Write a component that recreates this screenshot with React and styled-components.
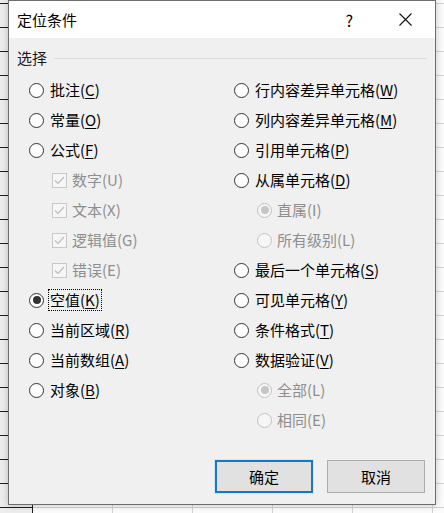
import React from 'react';
import styled, { createGlobalStyle } from 'styled-components';

const GlobalStyle = createGlobalStyle`
  body {
    margin: 0;
    font-family: "Noto Sans CJK SC", "Noto Sans", sans-serif;
  }
`;

// spreadsheet behind the dialog
const Sheet = styled.div`
  width: 444px;
  height: 513px;
  overflow: hidden;
  padding-left: 8px;
  box-sizing: border-box;
  background-color: #fbfbfb;
  background-image:
    linear-gradient(#1e1e1e 1px, transparent 1px),
    linear-gradient(90deg, transparent 32px, #1e1e1e 32px, #1e1e1e 33px, transparent 33px),
    linear-gradient(#d2d2d2 1px, transparent 1px),
    linear-gradient(90deg, #d2d2d2 1px, transparent 1px),
    linear-gradient(90deg, #ededed 32px, transparent 32px);
  background-size: 32px 24px, 100% 100%, 100% 24px, 80px 100%, 100% 100%;
  background-position: 0 3px, 0 0, 0 3px, 32px 0, 0 0;
  background-repeat: repeat-y, no-repeat, repeat, repeat, no-repeat;
`;

const Dialog = styled.div`
  width: 428px;
  height: 505px;
  box-sizing: border-box;
  border: 1px solid #6e6e6e;
  background: #f0f0f0;
  box-shadow: 0 0 7px rgba(0, 0, 0, 0.22);
  display: flex;
  flex-direction: column;
`;

const TitleBar = styled.div`
  height: 37px;
  flex: none;
  background: #fff;
  display: flex;
  align-items: center;
  padding: 0 23px 0 8px;
  font-size: 15px;
  color: #000;
`;

const Title = styled.div`
  flex: 1;
  line-height: 20px;
`;

const Help = styled.span`
  font-size: 16px;
  line-height: 20px;
  margin-right: 46px;
`;

const Body = styled.div`
  flex: 1;
  display: flex;
  flex-direction: column;
  padding: 10px 8px 11px 8px;
`;

const GroupHeader = styled.div`
  height: 20px;
  display: flex;
  align-items: center;
  font-size: 15px;
  color: #1a1a1a;
  line-height: 20px;

  &::after {
    content: '';
    flex: 1;
    height: 1px;
    background: #dadada;
    margin-left: 7px;
  }
`;

const Columns = styled.div`
  display: grid;
  grid-template-columns: 205px 1fr;
  margin: 7px 0 0 12px;
`;

const Column = styled.div`
  display: flex;
  flex-direction: column;
`;

const Row = styled.div`
  height: 30px;
  display: flex;
  align-items: center;
  gap: ${p => (p.$indent ? '5px' : '6px')};
  padding-left: ${p => (p.$indent ? '23px' : '0')};
  font-size: 15px;
  color: ${p => (p.$disabled ? '#8e8e8e' : '#000')};
  white-space: nowrap;
`;

const Label = styled.span`
  line-height: 20px;
  padding: 0 1px;
  margin-left: -1px;
  outline: ${p => (p.$focused ? '1px dotted #000' : 'none')};
  outline-offset: 0;

  u {
    text-decoration-thickness: 1px;
    text-underline-offset: 2px;
  }
`;

const RadioCircle = styled.span`
  width: 15px;
  height: 15px;
  flex: none;
  box-sizing: border-box;
  border-radius: 50%;
  border: 1px solid ${p => (p.$disabled ? '#c2c2c2' : '#333')};
  background: ${p => (p.$disabled ? '#f6f6f6' : '#fff')};
  display: flex;
  align-items: center;
  justify-content: center;

  &::after {
    content: '';
    display: ${p => (p.$checked ? 'block' : 'none')};
    width: 8px;
    height: 8px;
    border-radius: 50%;
    background: ${p => (p.$disabled ? '#c6c6c6' : '#333')};
  }
`;

const CheckBox = styled.span`
  width: 15px;
  height: 15px;
  flex: none;
  box-sizing: border-box;
  border: 1px solid #c8c8c8;
  background: #f6f6f6;
  display: flex;
  align-items: center;
  justify-content: center;
`;

const Footer = styled.div`
  margin-top: auto;
  display: flex;
  justify-content: flex-end;
  gap: 14px;
  padding-right: 2px;
`;

const Button = styled.button`
  width: 98px;
  height: 33px;
  box-sizing: border-box;
  font-family: inherit;
  font-size: 15px;
  color: #000;
  background: #e1e1e1;
  border: ${p => (p.$primary ? '2px solid #1a77bd' : '1px solid #adadad')};
  box-shadow: ${p => (p.$primary ? '0 0 0 1px #cfe6f6' : 'none')};
  padding: 0;
`;

const Key = ({ children }) => <u>{children}</u>;

const Radio = ({ checked, disabled, indent, focused, text, k }) => (
  <Row $indent={indent} $disabled={disabled}>
    <RadioCircle $checked={checked} $disabled={disabled} />
    <Label $focused={focused}>
      {text}({disabled ? k : <Key>{k}</Key>})
    </Label>
  </Row>
);

const Check = ({ text, k }) => (
  <Row $indent $disabled>
    <CheckBox>
      <svg width="11" height="9" viewBox="0 0 11 9">
        <polyline points="1,4.5 4,7.5 10,1" fill="none" stroke="#bdbdbd" strokeWidth="1.2" />
      </svg>
    </CheckBox>
    <Label>{text}({k})</Label>
  </Row>
);

export default function App() {
  return (
    <>
      <GlobalStyle />
      <Sheet>
        <Dialog>
          <TitleBar>
            <Title>定位条件</Title>
            <Help>?</Help>
            <svg width="13" height="13" viewBox="0 0 13 13">
              <path d="M0.5 0.5 L12.5 12.5 M12.5 0.5 L0.5 12.5" stroke="#111" strokeWidth="1.1" />
            </svg>
          </TitleBar>
          <Body>
            <GroupHeader>选择</GroupHeader>
            <Columns>
              <Column>
                <Radio text="批注" k="C" />
                <Radio text="常量" k="O" />
                <Radio text="公式" k="F" />
                <Check text="数字" k="U" />
                <Check text="文本" k="X" />
                <Check text="逻辑值" k="G" />
                <Check text="错误" k="E" />
                <Radio text="空值" k="K" checked focused />
                <Radio text="当前区域" k="R" />
                <Radio text="当前数组" k="A" />
                <Radio text="对象" k="B" />
              </Column>
              <Column>
                <Radio text="行内容差异单元格" k="W" />
                <Radio text="列内容差异单元格" k="M" />
                <Radio text="引用单元格" k="P" />
                <Radio text="从属单元格" k="D" />
                <Radio text="直属" k="I" indent disabled checked />
                <Radio text="所有级别" k="L" indent disabled />
                <Radio text="最后一个单元格" k="S" />
                <Radio text="可见单元格" k="Y" />
                <Radio text="条件格式" k="T" />
                <Radio text="数据验证" k="V" />
                <Radio text="全部" k="L" indent disabled checked />
                <Radio text="相同" k="E" indent disabled />
              </Column>
            </Columns>
            <Footer>
              <Button $primary>确定</Button>
              <Button>取消</Button>
            </Footer>
          </Body>
        </Dialog>
      </Sheet>
    </>
  );
}
